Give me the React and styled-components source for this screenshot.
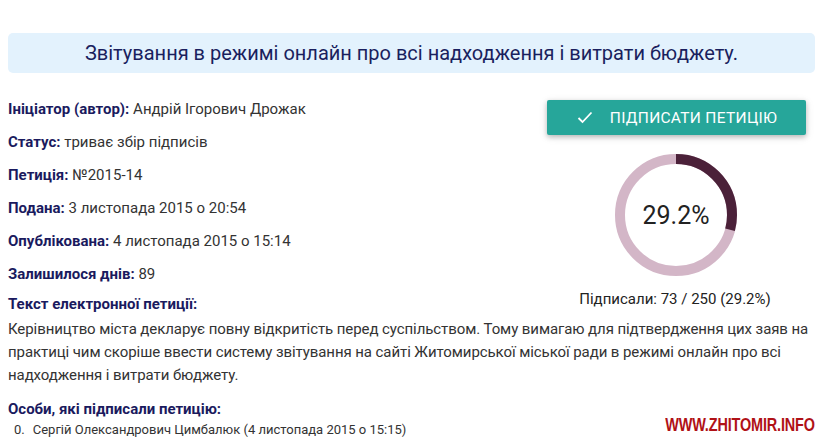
import React from "react";
import styled, { createGlobalStyle } from "styled-components";

const Global = createGlobalStyle`
  html, body { margin: 0; padding: 0; background: #fff; }
  body { font-family: Roboto, "Noto Sans", sans-serif; color: #333; }
`;

const Page = styled.div`
  position: relative;
  width: 823px;
  height: 440px;
  overflow: hidden;
  box-sizing: border-box;
  padding: 33px 6px 0 8px;
`;

const TitleBox = styled.div`
  background: #e3f2fd;
  border-radius: 5px;
  height: 40px;
  margin-right: 2px;
  display: flex;
  align-items: center;
  justify-content: center;
  font-size: 20px;
  color: #1a1f5e;
`;

const Main = styled.div`
  display: flex;
  justify-content: space-between;
  margin-top: 25px;
`;

const InfoList = styled.div`
  display: flex;
  flex-direction: column;
  gap: 15px;
  padding-top: 2px;
`;

const Row = styled.div`
  font-size: 15px;
  line-height: 18px;
  color: #333;
`;

const Label = styled.b`
  font-weight: 700;
  color: #1a1a5e;
`;

const Side = styled.div`
  width: 260px;
  margin-right: 11px;
  display: flex;
  flex-direction: column;
  align-items: center;
`;

const SignButton = styled.button`
  width: 259px;
  height: 35px;
  border: none;
  border-radius: 2px;
  background: #26a69a;
  color: #fff;
  font-family: Roboto, sans-serif;
  font-size: 15.5px;
  letter-spacing: 0.3px;
  display: flex;
  align-items: center;
  justify-content: center;
  gap: 17px;
  box-shadow: 0 2px 5px rgba(0,0,0,0.22), 0 2px 10px rgba(0,0,0,0.1);
  padding: 0 0 0 2px;
  margin-top: 2px;
`;

const RingWrap = styled.div`
  position: relative;
  width: 122px;
  height: 122px;
  margin-top: 19px;
  display: flex;
  align-items: center;
  justify-content: center;
`;

const RingSvg = styled.svg`
  position: absolute;
  inset: 0;
`;

const Percent = styled.div`
  position: relative;
  font-size: 25px;
  color: #222;
`;

const Signed = styled.div`
  margin-top: 14px;
  font-size: 15px;
  color: #222;
  padding-right: 2px;
`;

const Section = styled.div`
  margin-top: -14px;
`;

const Heading = styled.div`
  font-size: 15px;
  font-weight: 700;
  color: #1a1a5e;
  line-height: 20px;
`;

const Body = styled.p`
  margin: 4px 0 0 0;
  font-size: 15px;
  line-height: 23px;
  letter-spacing: -0.08px;
  color: #333;
`;

const SignersHeading = styled(Heading)`
  margin-top: 12px;
`;

const Signers = styled.ol`
  margin: 3px 0 0 0;
  padding: 0 0 0 6px;
  font-size: 13px;
  color: #333;
  list-style: none;
`;

const Signer = styled.li`
  display: flex;
  gap: 8px;
`;

const Watermark = styled.div`
  position: absolute;
  right: 8px;
  bottom: 4px;
  font-family: "Liberation Sans", Arial, sans-serif;
  font-weight: 700;
  font-size: 19px;
  color: #b01116;
  transform: scaleX(0.76);
  transform-origin: right center;
  letter-spacing: -0.2px;
`;

function Ring({ value }) {
  const r = 56;
  const c = 2 * Math.PI * r;
  const dash = (value / 100) * c;
  return (
    <RingSvg width="122" height="122" viewBox="0 0 122 122">
      <circle cx="61" cy="61" r={r} fill="none" stroke="#d3b6c7" strokeWidth="10" />
      <circle
        cx="61"
        cy="61"
        r={r}
        fill="none"
        stroke="#4b2139"
        strokeWidth="10"
        strokeDasharray={`${dash} ${c}`}
        transform="rotate(-90 61 61)"
      />
    </RingSvg>
  );
}

const info = [
  ["Ініціатор (автор):", "Андрій Ігорович Дрожак"],
  ["Статус:", "триває збір підписів"],
  ["Петиція:", "№2015-14"],
  ["Подана:", "3 листопада 2015 о 20:54"],
  ["Опублікована:", "4 листопада 2015 о 15:14"],
  ["Залишилося днів:", "89"],
];

export default function App() {
  return (
    <>
      <Global />
      <Page>
        <TitleBox>Звітування в режимі онлайн про всі надходження і витрати бюджету.</TitleBox>
        <Main>
          <InfoList>
            {info.map(([l, v]) => (
              <Row key={l}>
                <Label>{l}</Label> {v}
              </Row>
            ))}
          </InfoList>
          <Side>
            <SignButton>
              <svg width="16" height="13" viewBox="0 0 16 13">
                <path d="M1.5 7 L5.5 11 L14.5 1.5" fill="none" stroke="#fff" strokeWidth="1.8" />
              </svg>
              ПІДПИСАТИ ПЕТИЦІЮ
            </SignButton>
            <RingWrap>
              <Ring value={29.2} />
              <Percent>29.2%</Percent>
            </RingWrap>
            <Signed>Підписали: 73 / 250 (29.2%)</Signed>
          </Side>
        </Main>
        <Section>
          <Heading>Текст електронної петиції:</Heading>
          <Body>
            Керівництво міста декларує повну відкритість перед суспільством. Тому вимагаю для підтвердження цих заяв на
            практиці чим скоріше ввести систему звітування на сайті Житомирської міської ради в режимі онлайн про всі
            надходження і витрати бюджету.
          </Body>
          <SignersHeading>Особи, які підписали петицію:</SignersHeading>
          <Signers>
            <Signer>
              <span>0.</span>
              <span>Сергій Олександрович Цимбалюк (4 листопада 2015 о 15:15)</span>
            </Signer>
          </Signers>
        </Section>
        <Watermark>WWW.ZHITOMIR.INFO</Watermark>
      </Page>
    </>
  );
}
